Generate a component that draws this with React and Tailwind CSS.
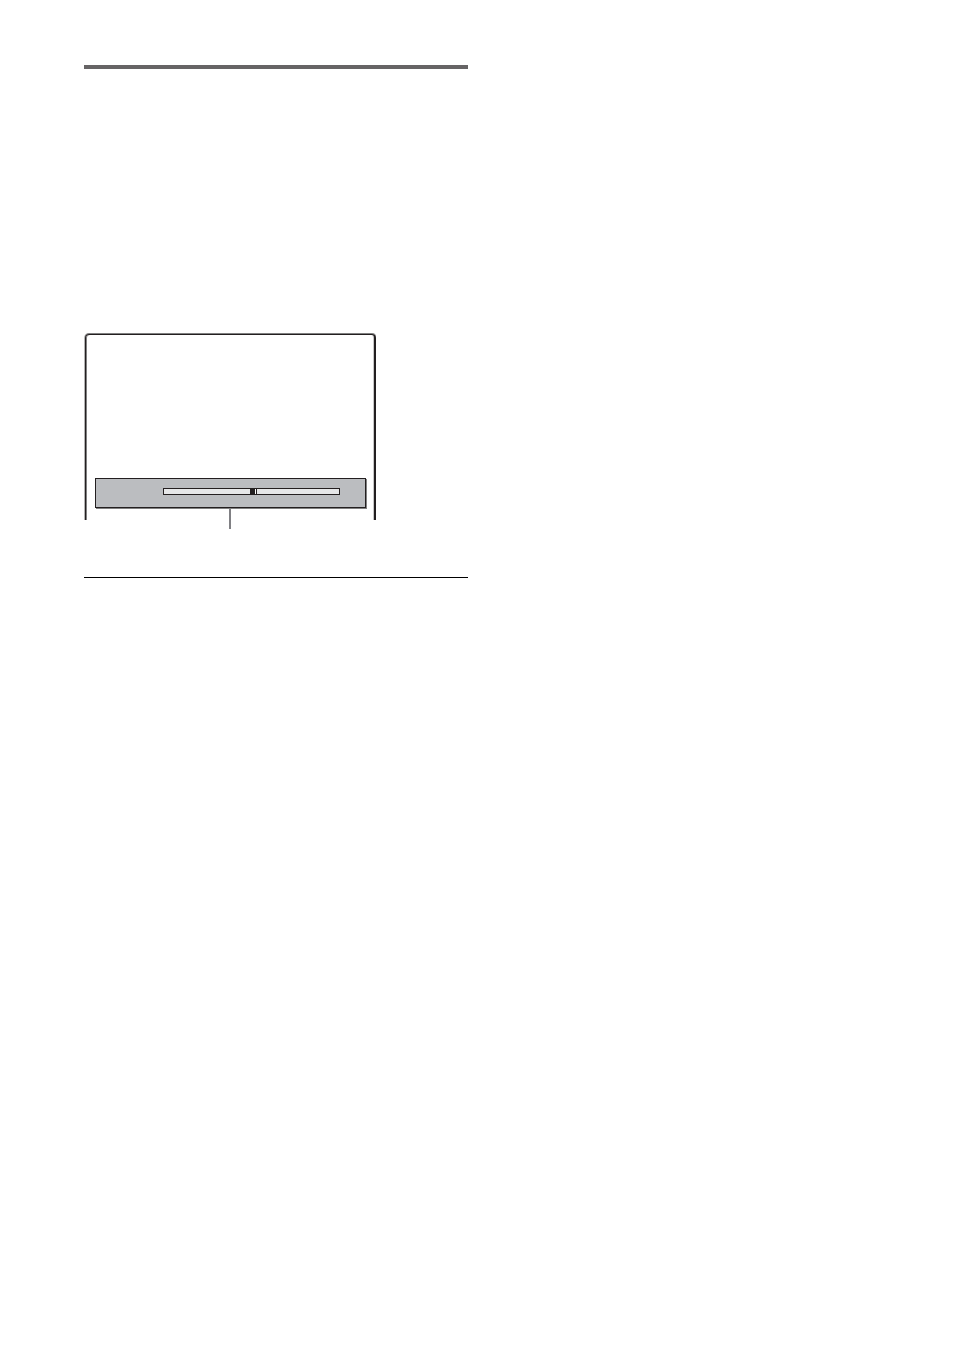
import React, { useState } from 'react';

const LevelBar = () => {
  const [level, setLevel] = useState(86);

  return (
    <div className="mx-2 flex h-[30px] items-start border border-[#231f20] bg-[#bbbdc0] pt-[9px] pr-[25px] pl-[67px] shadow-[1px_1px_0_0_#808080]">
      <input
        type="range"
        min="0"
        max="168"
        value={level}
        onChange={(e) => setLevel(Number(e.target.value))}
        aria-label="Level"
        className="m-0 block h-[7px] w-full min-w-0 appearance-none border border-[#231f20] bg-[#e6e7e8] outline-none [&::-webkit-slider-thumb]:h-[5px] [&::-webkit-slider-thumb]:w-[7px] [&::-webkit-slider-thumb]:appearance-none [&::-webkit-slider-thumb]:bg-[linear-gradient(to_right,#231f20_5px,#ffffff_5px,#ffffff_6px,#231f20_6px)]"
      />
    </div>
  );
};

const Screen = () => {
  return (
    <div className="ml-px w-[291px]">
      <div className="flex h-[186px] flex-col justify-end rounded-t-[4px] border-t border-r-2 border-l border-[#231f20] pb-3 pl-px shadow-[0_-1px_0_0_#808080,-1px_0_0_0_#b4b4b4,inset_1px_0_0_0_#808080,inset_-1px_0_0_0_#c8c8c8]">
        <LevelBar />
      </div>
    </div>
  );
};

const App = () => {
  return (
    <main className="min-h-screen bg-white pt-[65px] pr-6 pl-21">
      <section className="w-full max-w-96">
        <hr className="h-1 border-0 bg-[#666465]" />
        <div className="relative mt-[265px]">
          <Screen />
          {/* callout line below the bar */}
          <div className="absolute top-[175px] left-[145px] h-5 w-[2px] bg-[#808084]" />
        </div>
        <hr className="mt-[57px] h-px border-0 bg-black" />
      </section>
    </main>
  );
};

export default App;
